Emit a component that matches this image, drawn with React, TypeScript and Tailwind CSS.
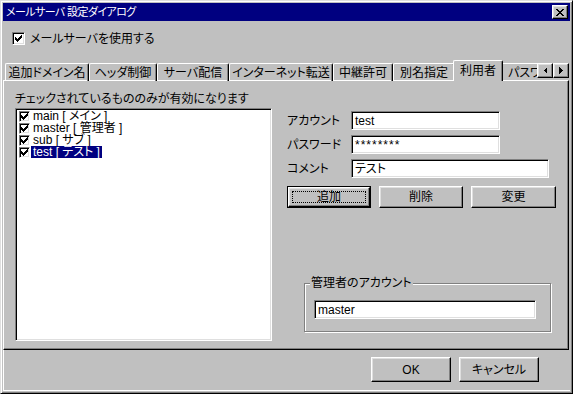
import React from 'react';

// Win95 style bevels
const raised =
  'border border-t-white border-l-white border-r-black border-b-black shadow-[inset_-1px_-1px_0_#808080,inset_1px_1px_0_#dfdfdf]';
const sunken =
  'border border-t-[#808080] border-l-[#808080] border-r-white border-b-white shadow-[inset_1px_1px_0_#000,inset_-1px_-1px_0_#dfdfdf]';

const checkPixels = [
  [6, 0], [5, 1], [6, 1], [0, 2], [4, 2], [5, 2], [6, 2],
  [0, 3], [1, 3], [3, 3], [4, 3], [5, 3],
  [0, 4], [1, 4], [2, 4], [3, 4], [4, 4],
  [1, 5], [2, 5], [3, 5], [2, 6],
];

const closePixels = [
  [0, 0], [1, 0], [6, 0], [7, 0],
  [1, 1], [2, 1], [5, 1], [6, 1],
  [2, 2], [3, 2], [4, 2], [5, 2],
  [3, 3], [4, 3],
  [2, 4], [3, 4], [4, 4], [5, 4],
  [1, 5], [2, 5], [5, 5], [6, 5],
  [0, 6], [1, 6], [6, 6], [7, 6],
];

const Pixels = ({ pixels, w, h }: { pixels: number[][]; w: number; h: number }) => (
  <svg width={w} height={h} viewBox={`0 0 ${w} ${h}`} shapeRendering="crispEdges">
    {pixels.map(([x, y]) => (
      <rect key={`${x}-${y}`} x={x} y={y} width="1" height="1" fill="#000" />
    ))}
  </svg>
);

const CheckBox = ({ big }: { big?: boolean }) => (
  <div
    className={`${sunken} bg-white flex items-center justify-center shrink-0 ${
      big ? 'w-[13px] h-[13px]' : 'w-[11px] h-[11px]'
    }`}
  >
    <Pixels pixels={checkPixels} w={7} h={7} />
  </div>
);

const tabs = [
  { label: '追加ドメイン名', w: 'w-[84px]' },
  { label: 'ヘッダ制御', w: 'w-[68px]' },
  { label: 'サーバ配信', w: 'w-[72px]' },
  { label: 'インターネット転送', w: 'w-[104px]' },
  { label: '中継許可', w: 'w-[60px]' },
  { label: '別名指定', w: 'w-[62px]' },
];

const users = [
  { id: 'main', name: 'メイン' },
  { id: 'master', name: '管理者' },
  { id: 'sub', name: 'サブ' },
  { id: 'test', name: 'テスト' },
];

const Field = ({ value, w }: { value: string; w: string }) => (
  <div className={`${sunken} bg-white h-[19px] ${w} pl-[3px] flex items-center text-[12px] leading-none`}>
    {value}
  </div>
);

const Button = ({ label, w, h }: { label: string; w: string; h: string }) => (
  <div className={`${raised} ${w} ${h} flex items-center justify-center text-[12px]`}>{label}</div>
);

const App: React.FC = () => {
  return (
    <div className="w-[573px] h-[394px] bg-[#c0c0c0] text-black font-['Liberation_Sans','Noto_Sans_CJK_JP',sans-serif] [font-feature-settings:'palt'] border border-t-[#dfdfdf] border-l-[#dfdfdf] border-r-black border-b-black shadow-[inset_1px_1px_0_#fff,inset_-1px_-1px_0_#808080] p-[2px] flex flex-col select-none">
      {/* Title bar */}
      <div className="h-[18px] bg-[#000080] flex items-center justify-between pl-[3px] pr-[2px] shrink-0">
        <span className="text-white text-[11px] tracking-[-0.6px] leading-none">メールサーバ 設定ダイアログ</span>
        <div className={`${raised} bg-[#c0c0c0] w-[16px] h-[14px] flex items-center justify-center`}>
          <Pixels pixels={closePixels} w={8} h={7} />
        </div>
      </div>

      {/* Use checkbox */}
      <div className="mt-[11px] ml-[9px] h-[13px] flex items-center gap-[5px]">
        <CheckBox big />
        <span className="text-[12px] leading-none">メールサーバを使用する</span>
      </div>

      {/* Tabs */}
      <div className="mt-[15px] h-[20px] flex items-end relative z-10">
        <div className="ml-[2px] w-[532px] h-[21px] self-start flex items-end overflow-hidden">
          {tabs.map((t) => (
            <div
              key={t.label}
              className={`${t.w} h-[18px] shrink-0 border-t border-l border-r border-t-white border-l-white border-r-black shadow-[inset_-1px_0_0_#808080] rounded-t-[2px] flex items-center justify-center text-[12px] leading-none`}
            >
              {t.label}
            </div>
          ))}
          <div className="w-[50px] h-[21px] -mx-[2px] shrink-0 relative z-10 bg-[#c0c0c0] border-t border-l border-r border-t-white border-l-white border-r-black shadow-[inset_-1px_0_0_#808080] rounded-t-[2px] flex items-center justify-center text-[12px] leading-none">
            利用者
          </div>
          <div className="w-[72px] h-[18px] shrink-0 border-t border-l border-r border-t-white border-l-white border-r-black shadow-[inset_-1px_0_0_#808080] rounded-t-[2px] flex items-center pl-[6px] text-[12px] leading-none">
            パスワード
          </div>
        </div>
        <div className="self-start mt-[3px] flex">
          <div className={`${raised} w-[16px] h-[15px] flex items-center justify-center`}>
            <svg width="4" height="7" viewBox="0 0 4 7" shapeRendering="crispEdges">
              <polygon points="4,0 4,7 0.5,3.5" fill="#000" />
            </svg>
          </div>
          <div className={`${raised} w-[16px] h-[15px] flex items-center justify-center`}>
            <svg width="4" height="7" viewBox="0 0 4 7" shapeRendering="crispEdges">
              <polygon points="0,0 0,7 3.5,3.5" fill="#000" />
            </svg>
          </div>
        </div>
      </div>

      {/* Tab panel */}
      <div className="w-[566px] h-[270px] shrink-0 border border-t-white border-l-white border-r-black border-b-black shadow-[inset_-1px_-1px_0_#808080] flex">
        <div className="ml-[11px] flex flex-col">
          <div className="mt-[11px] h-[15px] text-[12px] leading-[15px]">チェックされているもののみが有効になります</div>
          <div className={`${sunken} bg-white mt-[1px] w-[257px] h-[233px] pt-[1px] flex flex-col`}>
            {users.map((u) => (
              <div key={u.id} className="h-[12px] pl-[3px] flex items-center">
                <CheckBox />
                <span
                  className={`ml-[1px] px-[2px] h-[12px] text-[12px] leading-[12px] whitespace-pre ${
                    u.id === 'test' ? 'bg-[#000080] text-white' : ''
                  }`}
                >
                  {`${u.id} [ ${u.name} ]`}
                </span>
              </div>
            ))}
          </div>
        </div>

        <div className="ml-[15px] mt-[30px] flex flex-col">
          <div className="flex flex-col gap-[5px]">
            <div className="flex items-center">
              <span className="w-[64px] text-[12px]">アカウント</span>
              <Field value="test" w="w-[149px]" />
            </div>
            <div className="flex items-center">
              <span className="w-[64px] text-[12px]">パスワード</span>
              <Field value="********" w="w-[149px] tracking-[1px]" />
            </div>
            <div className="flex items-center">
              <span className="w-[64px] text-[12px]">コメント</span>
              <Field value="テスト" w="w-[198px]" />
            </div>
          </div>

          <div className="mt-[8px] flex gap-[8px]">
            <div className="w-[84px] h-[22px] border border-black">
              <div className={`${raised} w-full h-full relative flex items-center justify-center text-[12px]`}>
                <span className="absolute inset-[3px] border border-dotted border-black" />
                追加
              </div>
            </div>
            <Button label="削除" w="w-[84px]" h="h-[22px]" />
            <Button label="変更" w="w-[85px]" h="h-[22px]" />
          </div>

          <div className="mt-[75px] ml-[17px] w-[247px] h-[49px] relative border border-[#808080] shadow-[inset_1px_1px_0_#fff,1px_1px_0_#fff] pt-[16px] pl-[9px]">
            <span className="absolute -top-[8px] left-[5px] px-[1px] bg-[#c0c0c0] text-[12px] leading-[15px]">
              管理者のアカウント
            </span>
            <Field value="master" w="w-[222px]" />
          </div>
        </div>
      </div>

      {/* Bottom buttons */}
      <div className="flex-1 border-l border-b border-white flex items-start pt-[7px] pl-[367px] gap-[8px]">
        <Button label="OK" w="w-[80px]" h="h-[25px]" />
        <Button label="キャンセル" w="w-[80px]" h="h-[25px]" />
      </div>
    </div>
  );
};

export default App;
